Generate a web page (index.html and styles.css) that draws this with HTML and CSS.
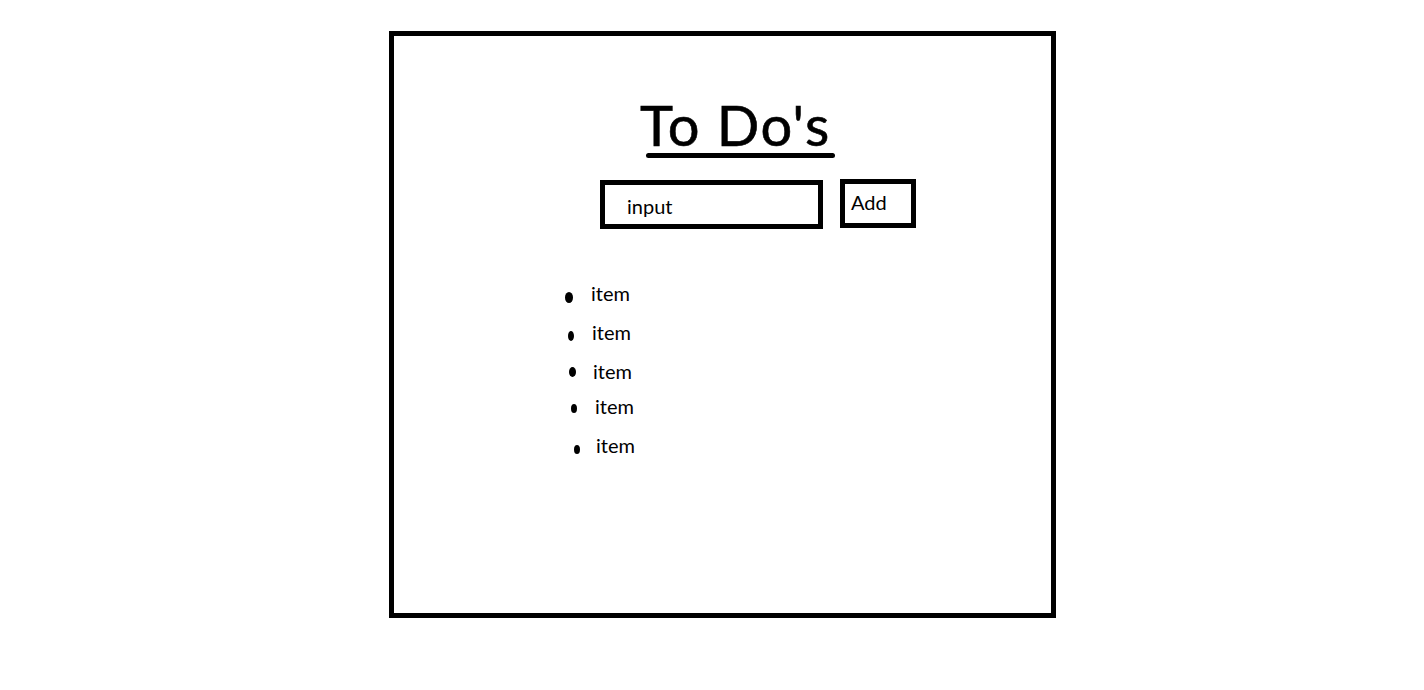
FILE: index.html
```html
<!DOCTYPE html>
<html lang="en">
<head>
<meta charset="utf-8">
<title>To Do's</title>
<link rel="stylesheet" href="styles.css">
</head>
<body>
<main class="frame">
  <h1 class="title">To Do's</h1>
  <div class="title-rule"></div>
  <form class="entry">
    <input class="entry-input" type="text" value="input">
    <button class="entry-add" type="button">Add</button>
  </form>
  <ul class="items">
    <li class="item"><span class="dot"></span><span class="label">item</span></li>
    <li class="item"><span class="dot"></span><span class="label">item</span></li>
    <li class="item"><span class="dot"></span><span class="label">item</span></li>
    <li class="item"><span class="dot"></span><span class="label">item</span></li>
    <li class="item"><span class="dot"></span><span class="label">item</span></li>
  </ul>
</main>
</body>
</html>
```

FILE: styles.css
```css
* { box-sizing: border-box; }

html, body {
  margin: 0;
  padding: 0;
  background: #ffffff;
}

body {
  font-family: Lato, "Open Sans", sans-serif;
  color: #000000;
}

.frame {
  margin: 31px 0 0 389px;
  width: 667px;
  height: 587px;
  border: 5px solid #000000;
  padding-top: 61px;
  display: flex;
  flex-direction: column;
  align-items: flex-start;
}

.title {
  margin: 0 0 0 246px;
  font-size: 56px;
  line-height: 56px;
  font-weight: 400;
  letter-spacing: 1.5px;
  -webkit-text-stroke: 0.6px #000000;
}

.title-rule {
  margin: 0 0 0 252px;
  width: 189px;
  height: 5px;
  border-radius: 3px;
  background: #000000;
}

.entry {
  margin: 21px 0 0 206px;
  display: flex;
  align-items: flex-start;
  gap: 17px;
}

.entry-input {
  margin: 1px 0 0 0;
  width: 223px;
  height: 49px;
  border: 5px solid #000000;
  border-radius: 0;
  padding: 9px 0 6px 22px;
  font-family: inherit;
  font-size: 20px;
  line-height: 24px;
  color: #000000;
  background: #ffffff;
  outline: none;
}

.entry-add {
  margin: 0;
  width: 76px;
  border: 5px solid #000000;
  border-radius: 0;
  padding: 6px 0 9px 6px;
  font-family: inherit;
  font-size: 20px;
  line-height: 24px;
  text-align: left;
  color: #000000;
  background: #ffffff;
}

.items {
  list-style: none;
  margin: 52px 0 0 171px;
  padding: 0;
  display: flex;
  flex-direction: column;
}

.item {
  display: flex;
  align-items: flex-start;
  height: 24px;
  font-size: 20px;
  line-height: 24px;
}

.dot {
  display: block;
  background: #000000;
  border-radius: 50%;
}

.item:nth-child(1) .dot { width: 8px; height: 11px; margin: 11px 18px 0 0; }
.item:nth-child(2) { margin: 15px 0 0 3px; }
.item:nth-child(2) .dot { width: 6px; height: 10px; margin: 11px 18px 0 0; }
.item:nth-child(3) { margin: 15px 0 0 4px; }
.item:nth-child(3) .dot { width: 7px; height: 10px; margin: 8px 17px 0 0; }
.item:nth-child(4) { margin: 11px 0 0 6px; }
.item:nth-child(4) .dot { width: 6px; height: 9px; margin: 10px 18px 0 0; }
.item:nth-child(5) { margin: 15px 0 0 9px; }
.item:nth-child(5) .dot { width: 6px; height: 9px; margin: 12px 16px 0 0; }
```
